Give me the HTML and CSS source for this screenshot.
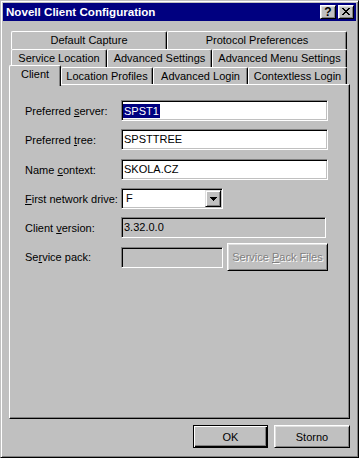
FILE: index.html
```html
<!DOCTYPE html>
<html>
<head>
<meta charset="utf-8">
<link rel="stylesheet" href="styles.css">
</head>
<body>
<div class="window">
  <div class="titlebar">
    <span class="title">Novell Client Configuration</span>
    <div class="tbtns">
      <div class="tbtn help">?</div>
      <div class="tbtn">
        <svg width="8" height="7" viewBox="0 0 8 7" shape-rendering="crispEdges"><path fill="#000" d="M0 0h2v1h-2zM6 0h2v1h-2zM1 1h2v1h-2zM5 1h2v1h-2zM2 2h4v1h-4zM3 3h2v1h-2zM2 4h4v1h-4zM1 5h2v1h-2zM5 5h2v1h-2zM0 6h2v1h-2zM6 6h2v1h-2z"/></svg>
      </div>
    </div>
  </div>
  <div class="body">
    <div class="tabs">
      <div class="tabrow">
        <div class="tab w156">Default Capture</div>
        <div class="tab w180">Protocol Preferences</div>
      </div>
      <div class="tabrow">
        <div class="tab w96">Service Location</div>
        <div class="tab w105">Advanced Settings</div>
        <div class="tab w135">Advanced Menu Settings</div>
      </div>
      <div class="tabrow">
        <div class="tab w50 selected">Client</div>
        <div class="tab w92">Location Profiles</div>
        <div class="tab w95">Advanced Login</div>
        <div class="tab w99">Contextless Login</div>
      </div>
    </div>
    <div class="panel">
      <div class="row">
        <div class="label">Preferred <u>s</u>erver:</div>
        <div class="field"><span class="sel">SPST1</span></div>
      </div>
      <div class="row">
        <div class="label">Preferred <u>t</u>ree:</div>
        <div class="field">SPSTTREE</div>
      </div>
      <div class="row gap9">
        <div class="label">Name <u>c</u>ontext:</div>
        <div class="field">SKOLA.CZ</div>
      </div>
      <div class="row">
        <div class="label"><u>F</u>irst network drive:</div>
        <div class="field select">
          <span class="seltext">F</span>
          <div class="arrow">
            <svg width="7" height="4" viewBox="0 0 7 4" shape-rendering="crispEdges"><path fill="#000" d="M0 0h7v1h-7zM1 1h5v1h-5zM2 2h3v1h-3zM3 3h1v1h-1z"/></svg>
          </div>
        </div>
      </div>
      <div class="row">
        <div class="label">Client <u>v</u>ersion:</div>
        <div class="field disabled w205">3.32.0.0</div>
      </div>
      <div class="row btnrow">
        <div class="label">Se<u>r</u>vice pack:</div>
        <div class="field disabled w102"></div>
        <div class="btn disabled spbtn"><span>Service <u>P</u>ack Files</span></div>
      </div>
    </div>
    <div class="actions">
      <div class="btn default okbtn">OK</div>
      <div class="btn stbtn">Storno</div>
    </div>
  </div>
</div>
</body>
</html>
```
FILE: styles.css
```css
* { box-sizing: border-box; }
html, body { margin: 0; padding: 0; }
body {
  font: 11px "Liberation Sans", Arial, sans-serif;
  color: #000;
  background: #c0c0c0;
}
.window {
  width: 359px;
  height: 458px;
  background: #c0c0c0;
  border: 1px solid;
  border-color: #c0c0c0 #000 #000 #c0c0c0;
  box-shadow: inset 1px 1px #fff, inset -1px -1px #808080;
  padding: 2px;
  display: flex;
  flex-direction: column;
}
.titlebar {
  height: 18px;
  flex: none;
  background: #000080;
  color: #fff;
  display: flex;
  align-items: center;
  justify-content: space-between;
  padding: 0 2px 0 3px;
}
.title { font-weight: bold; font-size: 11.6px; line-height: 18px; white-space: nowrap; }
.tbtns { display: flex; gap: 2px; }
.tbtn {
  width: 16px;
  height: 14px;
  background: #c0c0c0;
  border: 1px solid;
  border-color: #fff #000 #000 #fff;
  box-shadow: inset 1px 1px #dfdfdf, inset -1px -1px #808080;
  display: flex;
  align-items: center;
  justify-content: center;
  color: #000;
}
.tbtn svg { display: block; margin-top: -1px; }
.tbtn.help { font-weight: bold; font-size: 12px; line-height: 12px; }
.body {
  flex: 1;
  padding: 10px 6px 7px;
  display: flex;
  flex-direction: column;
}
.tabs {
  display: flex;
  flex-direction: column;
  padding-left: 2px;
  margin-bottom: -1px;
}
.tabrow { display: flex; height: 18px; }
.tab {
  height: 18px;
  flex: none;
  border-left: 1px solid #fff;
  border-top: 1px solid #fff;
  border-right: 1px solid #000;
  box-shadow: inset -1px 0 #808080;
  border-radius: 2px 2px 0 0;
  text-align: center;
  padding-top: 2px;
  line-height: 13px;
  white-space: nowrap;
  background: #c0c0c0;
}
.tab.selected {
  position: relative;
  z-index: 2;
  margin-top: -2px;
  margin-left: -2px;
  height: 21px;
}
.w50 { width: 50px; }
.tab.w50.selected { width: 52px; }
.w92 { width: 92px; }
.w95 { width: 95px; }
.w96 { width: 96px; }
.w99 { width: 99px; }
.w105 { width: 105px; }
.w135 { width: 135px; }
.w156 { width: 156px; }
.w180 { width: 180px; }
.panel {
  position: relative;
  z-index: 1;
  flex: none;
  height: 335px;
  border: 1px solid;
  border-color: #fff #000 #000 #fff;
  box-shadow: inset -1px -1px #808080;
  padding: 15px 0 0 15px;
  display: flex;
  flex-direction: column;
  background: #c0c0c0;
}
.row { display: flex; align-items: center; height: 21px; flex: none; }
.row + .row { margin-top: 8px; }
.row.gap9 { margin-top: 9px; }
.row.btnrow { margin-top: 5px; height: 28px; }
.label { width: 96px; flex: none; white-space: nowrap; }
.field {
  width: 207px;
  height: 21px;
  flex: none;
  background: #fff;
  border: 1px solid;
  border-color: #808080 #fff #fff #808080;
  box-shadow: inset 1px 1px #000, inset -1px -1px #c0c0c0;
  padding-left: 2px;
  display: flex;
  align-items: center;
  line-height: 19px;
  white-space: nowrap;
}
.sel {
  background: #000080;
  color: #fff;
  line-height: 14px;
  padding: 0 1px;
  margin-left: -1px;
}
.field.disabled { background: #c0c0c0; }
.w205 { width: 205px; }
.w102 { width: 102px; }
.select { width: 102px; padding-left: 4px; padding-right: 1px; }
.seltext { flex: 1; }
.arrow {
  width: 16px;
  height: 17px;
  flex: none;
  background: #c0c0c0;
  border: 1px solid;
  border-color: #dfdfdf #000 #000 #dfdfdf;
  box-shadow: inset 1px 1px #fff, inset -1px -1px #808080;
  display: flex;
  align-items: center;
  justify-content: center;
}
.arrow svg { display: block; }
.btn {
  background: #c0c0c0;
  border: 1px solid;
  border-color: #fff #000 #000 #fff;
  box-shadow: inset 1px 1px #dfdfdf, inset -1px -1px #808080;
  display: flex;
  align-items: center;
  justify-content: center;
  white-space: nowrap;
}
.btn.disabled { color: #808080; text-shadow: 1px 1px #fff; }
.spbtn { width: 101px; height: 28px; margin-left: 4px; }
.actions {
  display: flex;
  justify-content: flex-end;
  gap: 6px;
  margin-top: 6px;
}
.okbtn { width: 75px; height: 23px; }
.stbtn { width: 76px; height: 23px; }
.btn.default {
  border-color: #000;
  box-shadow: inset 1px 1px #fff, inset -1px -1px #000, inset -2px -2px #808080;
}
```
